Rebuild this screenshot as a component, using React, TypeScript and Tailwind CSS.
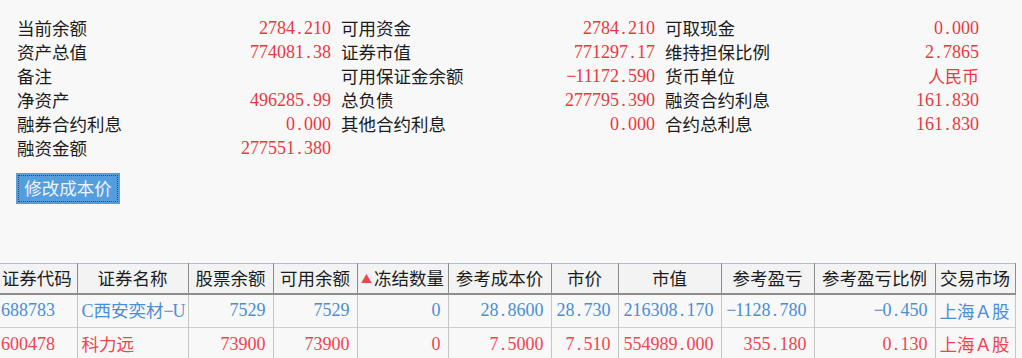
import React from 'react';

const cjk = '[font-family:"Noto_Sans_CJK_SC",sans-serif]';
const num = '[font-family:"Liberation_Serif","Noto_Sans_CJK_SC",serif]';

type Field = { label: string; value: string; cjkValue?: boolean };

const rows: (Field | null)[][] = [
  [
    { label: '当前余额', value: '2784.210' },
    { label: '可用资金', value: '2784.210' },
    { label: '可取现金', value: '0.000' },
  ],
  [
    { label: '资产总值', value: '774081.38' },
    { label: '证券市值', value: '771297.17' },
    { label: '维持担保比例', value: '2.7865' },
  ],
  [
    { label: '备注', value: '' },
    { label: '可用保证金余额', value: '-11172.590' },
    { label: '货币单位', value: '人民币', cjkValue: true },
  ],
  [
    { label: '净资产', value: '496285.99' },
    { label: '总负债', value: '277795.390' },
    { label: '融资合约利息', value: '161.830' },
  ],
  [
    { label: '融券合约利息', value: '0.000' },
    { label: '其他合约利息', value: '0.000' },
    { label: '合约总利息', value: '161.830' },
  ],
  [{ label: '融资金额', value: '277551.380' }, null, null],
];

const columns = [
  { title: '证券代码', w: 80 },
  { title: '证券名称', w: 111 },
  { title: '股票余额', w: 85 },
  { title: '可用余额', w: 84 },
  { title: '冻结数量', w: 91, sorted: true },
  { title: '参考成本价', w: 103 },
  { title: '市价', w: 67 },
  { title: '市值', w: 103 },
  { title: '参考盈亏', w: 93 },
  { title: '参考盈亏比例', w: 121 },
  { title: '交易市场', w: 80 },
];

const holdings = [
  {
    color: 'text-[#4a8ed6]',
    cells: ['688783', 'C西安奕材-U', '7529', '7529', '0', '28.8600', '28.730', '216308.170', '-1128.780', '-0.450', '上海Ａ股'],
  },
  {
    color: 'text-[#f2434f]',
    cells: ['600478', '科力远', '73900', '73900', '0', '7.5000', '7.510', '554989.000', '355.180', '0.130', '上海Ａ股'],
  },
];

// numbers in the reference use a half-width font: digits 9px, "." and "-" too
function Num({ v }: { v: string }) {
  return (
    <>
      {v.split('').map((ch, i) =>
        ch === '.' || ch === '-' ? (
          <span key={i} className="inline-block w-[9px] text-center">
            {ch === '-' ? '−' : ch}
          </span>
        ) : (
          <React.Fragment key={i}>{ch}</React.Fragment>
        )
      )}
    </>
  );
}

function FieldCell({ f }: { f: Field | null }) {
  if (!f) return <div />;
  return (
    <div className="flex h-6 items-center justify-between">
      <span className={`${cjk} text-[17.5px] leading-6 text-[#1c1c1c]`}>{f.label}</span>
      <span
        className={`${f.cjkValue ? `${cjk} text-[17px]` : `${num} text-[18px]`} leading-6 text-[#e8393f]`}
      >
        {f.cjkValue ? f.value : <Num v={f.value} />}
      </span>
    </div>
  );
}

export default function App() {
  return (
    <div className="h-[358px] w-[1022px] overflow-hidden bg-[#f8f8f8]">
      {/* account summary */}
      <div className="grid grid-cols-[314px_314px_314px] gap-x-[10px] pl-[17px] pt-4">
        {rows.map((r, i) => (
          <React.Fragment key={i}>
            {r.map((f, j) => (
              <FieldCell key={j} f={f} />
            ))}
          </React.Fragment>
        ))}
      </div>

      <div className="pl-4 pt-[13px]">
        <button
          className={`${cjk} flex h-[31px] w-[104px] items-center justify-center bg-[#549ede] text-[17.5px] text-[#eef4ff] outline-1 outline-dotted outline-offset-[-3px] outline-[#3a4452]`}
        >
          修改成本价
        </button>
      </div>

      {/* holdings table */}
      <div className="mt-[59px] ml-[-3px]">
        <table className="table-fixed border-collapse" style={{ width: 1018 }}>
          <colgroup>
            {columns.map((c) => (
              <col key={c.title} style={{ width: c.w }} />
            ))}
          </colgroup>
          <thead>
            <tr className="h-[30px] border-t border-t-[#b3bfcf] border-b-2 border-b-[#8e8e8e] bg-[#f3f3f3]">
              {columns.map((c) => (
                <th
                  key={c.title}
                  className={`${cjk} border-r border-r-[#8c8c8c] p-0 text-center text-[17.5px] font-normal leading-[28px] whitespace-nowrap text-[#1c1c1c]`}
                >
                  {c.sorted && <span className="mr-[2px] text-[11px] text-[#f2434f] align-[2px]">▲</span>}
                  {c.title}
                </th>
              ))}
            </tr>
          </thead>
          <tbody>
            {holdings.map((h) => (
              <tr key={h.cells[0]} className={`h-[34px] border-b border-b-[#cfcfcf] ${h.color}`}>
                {h.cells.map((v, i) => {
                  const isText = i === 1 || i === 10;
                  const left = i <= 1 || i === 10;
                  return (
                    <td
                      key={i}
                      className={`border-r border-r-[#c6c6c6] p-0 whitespace-nowrap overflow-hidden ${
                        left ? 'pl-[4px] text-left' : 'pr-[7px] text-right'
                      } ${isText ? `${cjk} text-[17.5px]` : `${num} text-[18px]`}`}
                    >
                      {i === 1 && v.startsWith('C') ? (
                        <>
                          <span className={`${num} text-[18px]`}>C</span>
                          {v.slice(1, -2)}
                          <span className={`${num} text-[18px]`}>
                            <Num v="-" />U
                          </span>
                        </>
                      ) : isText ? (
                        v
                      ) : (
                        <Num v={v} />
                      )}
                    </td>
                  );
                })}
              </tr>
            ))}
          </tbody>
        </table>
      </div>
    </div>
  );
}
